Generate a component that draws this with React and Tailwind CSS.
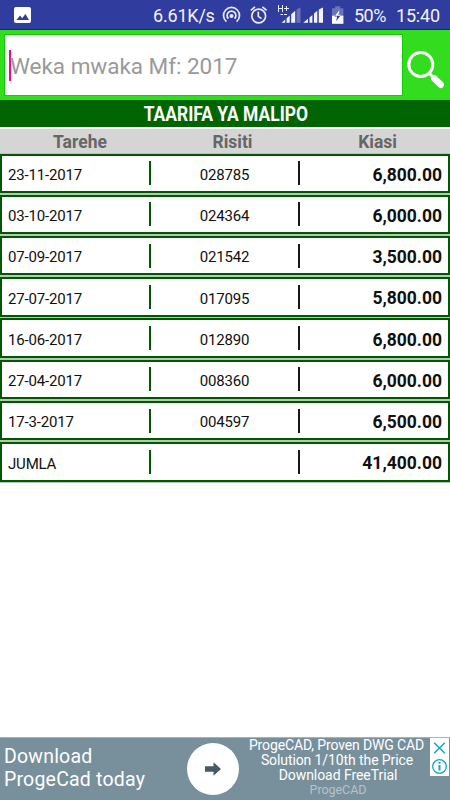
import React from "react";

const payments = [
  ["23-11-2017", "028785", "6,800.00"],
  ["03-10-2017", "024364", "6,000.00"],
  ["07-09-2017", "021542", "3,500.00"],
  ["27-07-2017", "017095", "5,800.00"],
  ["16-06-2017", "012890", "6,800.00"],
  ["27-04-2017", "008360", "6,000.00"],
  ["17-3-2017", "004597", "6,500.00"],
  ["JUMLA", "", "41,400.00"],
];

function StatusIcons() {
  return (
    <svg className="ml-[7px] h-[29px] w-[124px] shrink-0" viewBox="222 0 124 29" fill="none">
      <g stroke="#e9ebf6" strokeWidth="1.7">
        <path d="M226.4 21.6A8 8 0 1 1 236.6 21.6" />
        <path d="M228.4 18.6A4.4 4.4 0 1 1 234.6 18.6" />
      </g>
      <circle cx="231.5" cy="16" r="2" fill="#e9ebf6" />
      <g stroke="#e9ebf6" strokeWidth="1.7">
        <circle cx="258.7" cy="16" r="6.9" />
        <path d="M258.3 11.8V16.4L261.5 18.6M250.8 10.3L255 6.8M262.4 6.8L266.6 10.3" />
      </g>
      <g stroke="#e9ebf6" strokeWidth="1">
        <path d="M278.5 5V12M282.5 5V12M278.5 8.5H282.5M284 8.5H289M286.5 6V11" />
        <path d="M280.5 14.5H283M284 14.5H287" />
      </g>
      <g fill="#f2f3fa">
        <path d="M281.5 22.7L285.2 19.4V22.7ZM286.6 18.2L289.7 15.5V22.7H286.6ZM291.2 14.2L295.2 10.7V22.7H291.2Z" />
        <path d="M303.2 22.7L308 18.7V22.7ZM309.5 17.4L312.4 14.9V22.7H309.5ZM314 13.6L317.3 10.8V22.7H314ZM318.8 9.6L323 7.6V22.7H318.8Z" />
      </g>
      <path d="M296.5 9.4L300.5 7.5V22.7H296.5Z" fill="#6874b8" />
      <path d="M332 8.2H335.2V6.2H340.2V8.2H343.4V16H332Z" fill="#6874b8" />
      <path d="M332 15.7H343.4V23.8H332Z" fill="#ffffff" />
      <path d="M339.7 9.7L334.4 16.6H337.2L336.1 21.3L341.2 14.7H338.4Z" fill="#303d9e" />
      <path d="M339.7 9.7L335 15.7H340.4L341.2 14.7H338.4Z" fill="#ffffff" />
    </svg>
  );
}

function StatusBar() {
  return (
    <header className="flex h-[30px] shrink-0 items-center border-b border-[#20207e] bg-[#303d9e] text-[18px] text-[#f2f3fa]">
      <svg className="ml-[14px] h-4 w-[17px] shrink-0" viewBox="0 0 17 16">
        <rect width="17" height="16" rx="2" fill="#fff" />
        <path d="M2.5 13L6 8.5L8.2 11.2L11.4 7L15 13Z" fill="#303d9e" />
      </svg>
      <span className="ml-[122px] w-[62px] shrink-0 whitespace-nowrap pt-[2px] tracking-[-0.2px]">6.61K/s</span>
      <StatusIcons />
      <span className="ml-[8px] w-[32px] shrink-0 whitespace-nowrap pt-[2px] tracking-[-0.5px]">50%</span>
      <span className="ml-[10px] whitespace-nowrap pt-[2px] tracking-[-0.2px]">15:40</span>
    </header>
  );
}

function SearchBar() {
  return (
    <div className="flex h-[70px] shrink-0 items-center bg-[#34dc20] pl-[5px]">
      <div className="flex h-[60px] w-[397px] items-center bg-white pl-1 outline outline-1 outline-[#10cd08]">
        <span className="h-[31px] w-[2px] bg-[#f5087d]" />
        <span className="-ml-[1px] whitespace-nowrap pt-[4px] text-[22.5px] tracking-[-0.03px] text-[#999]">Weka mwaka Mf: 2017</span>
      </div>
      <svg className="ml-[4px] mt-[10px] h-10 w-10" viewBox="0 0 40 40" fill="none">
        <circle cx="14.8" cy="14.5" r="12" stroke="#fff" strokeWidth="3" />
        <path d="M23 23L28 28" stroke="#fff" strokeWidth="3" />
        <path d="M28.3 28.5L34.7 34.7" stroke="#fff" strokeWidth="6.5" strokeLinecap="round" />
      </svg>
    </div>
  );
}

function AdBanner() {
  return (
    <footer className="relative flex h-[63px] shrink-0 border-t border-[#a6b3ba] bg-[#78909c] text-white">
      <div className="w-[187px] pl-1 pt-[8px] text-[19.5px] leading-[22.5px] tracking-[0.2px]">
        <div>Download</div>
        <div className="whitespace-nowrap">ProgeCad today</div>
      </div>
      <div className="mt-[5px] flex h-[52px] w-[52px] items-center justify-center rounded-full bg-white">
        <svg className="h-[14px] w-4" viewBox="0 0 16 14">
          <path d="M0 4.3H8.5V0.3L16 7L8.5 13.7V9.7H0Z" fill="#455a64" />
        </svg>
      </div>
      <div className="w-[195px] text-center text-[14px] leading-[15px] tracking-[-0.13px]">
        <div className="whitespace-nowrap">ProgeCAD, Proven DWG CAD</div>
        <div className="pl-px tracking-[-0.1px]">Solution 1/10th the Price</div>
        <div className="pl-[3px] tracking-[-0.06px]">Download FreeTrial</div>
        <div className="pl-[3px] text-[12.5px] leading-[13px] tracking-[-0.05px] text-[#b7c3ca]">ProgeCAD</div>
      </div>
      <svg className="absolute right-[1px] top-0 h-[38px] w-[19px]" viewBox="0 0 19 38" fill="none">
        <path d="M0 0H19V38H0Z" fill="#fff" />
        <path d="M4.2 4.7L14.8 15.3M14.8 4.7L4.2 15.3" stroke="#10a6c5" strokeWidth="1.5" />
        <circle cx="9.5" cy="28.5" r="6.8" stroke="#10a6c5" strokeWidth="1.3" />
        <path d="M9.5 27V32.5M9.5 24V25.7" stroke="#10a6c5" strokeWidth="2" />
      </svg>
    </footer>
  );
}

export default function App() {
  return (
    <div className="flex h-[800px] w-[450px] flex-col overflow-hidden bg-white font-['Roboto',sans-serif]">
      <StatusBar />
      <SearchBar />
      <h1 className="flex h-[27px] shrink-0 items-center justify-center bg-[#006500] pl-[2px] pt-[3px] text-[19.5px] font-bold text-white">
        <span className="scale-x-[0.895] whitespace-nowrap">TAARIFA YA MALIPO</span>
      </h1>
      <div className="mt-[2px] flex h-[24px] shrink-0 items-center bg-[#d5d5d5] pt-[3px] text-[17.5px] font-bold text-[#666]">
        <span className="w-[160px] text-center">Tarehe</span>
        <span className="w-[145px] text-center">Risiti</span>
        <span className="w-[145px] text-center">Kiasi</span>
      </div>
      <main className="flex flex-1 flex-col gap-[1.8px] pt-[0.5px]">
        {payments.map(([date, receipt, amount]) => (
          <div key={date} className="flex h-[39.45px] shrink-0 items-center border-2 border-[#005900] bg-white text-[15px] text-[#101010] outline outline-1 outline-[#b5c8b5]">
            <span className="w-[147px] pl-[6px] pt-[4px] tracking-[-0.18px]">{date}</span>
            <span className="h-6 w-[2px] bg-[#005900]" />
            <span className="w-[147px] pt-[4px] text-center tracking-[-0.15px]">{receipt}</span>
            <span className="h-6 w-[2px] bg-[#181818]" />
            <span className="flex-1 pr-[6px] pt-[3px] text-right text-[17.5px] font-bold">{amount}</span>
          </div>
        ))}
      </main>
      <AdBanner />
    </div>
  );
}
